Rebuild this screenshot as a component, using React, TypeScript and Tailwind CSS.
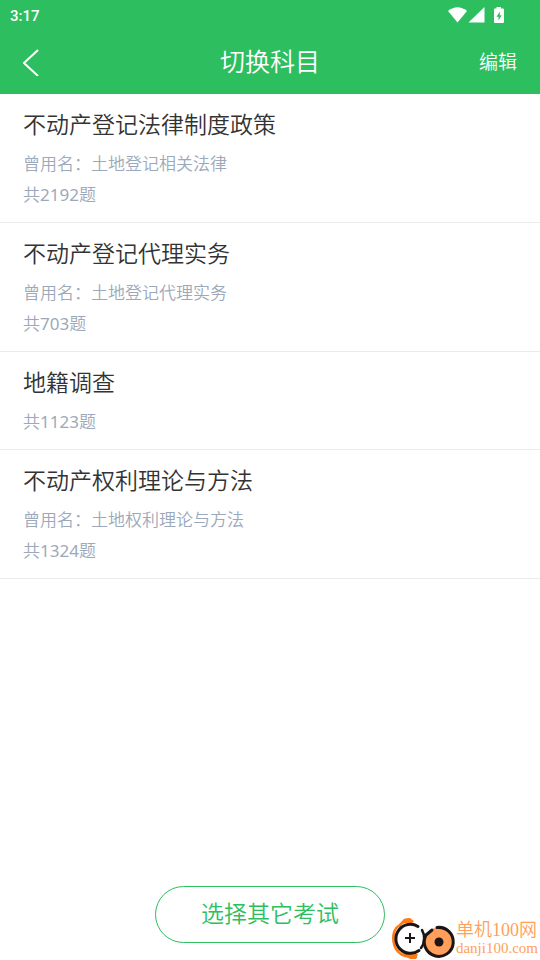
import React from 'react';

const subjects = [
  { title: '不动产登记法律制度政策', formerName: '土地登记相关法律', count: 2192 },
  { title: '不动产登记代理实务', formerName: '土地登记代理实务', count: 703 },
  { title: '地籍调查', count: 1123 },
  { title: '不动产权利理论与方法', formerName: '土地权利理论与方法', count: 1324 },
];

const StatusBar = () => (
  <div className="flex h-8 items-center justify-between pl-[10px] pr-9">
    <span className="font-[Roboto,sans-serif] text-[15px] font-medium">3:17</span>
    <svg width="56" height="18" viewBox="0 0 56 18" fill="currentColor" aria-hidden="true">
      <path d="M0 4Q9.500-3.500 19 4L9.500 15.500Z" />
      <path d="M20.500 15.500L36.500 0V15.500Z" />
      <path fillRule="evenodd" d="M48.500 0H53V1.500H55Q56 1.500 56 2.500V15Q56 16 55 16H47Q46 16 46 15V2.500Q46 1.500 47 1.500H48.500ZM51.800 4.500L48.500 9.700H50.500V13.500L53.700 8.300H51.800Z" />
    </svg>
  </div>
);

const Header = () => (
  <header className="bg-[#2dbe60] text-white">
    <StatusBar />
    <div className="grid h-[62px] grid-cols-3 items-center px-[23px] pb-[2px]">
      <button aria-label="返回" className="justify-self-start">
        <svg width="16" height="28" viewBox="0 0 16 28" fill="none" stroke="currentColor" strokeWidth="2" aria-hidden="true">
          <path d="M15 2L1 15L15 28" />
        </svg>
      </button>
      <h1 className="justify-self-center text-[25px]">切换科目</h1>
      <button className="justify-self-end text-[19px]">编辑</button>
    </div>
  </header>
);

const Watermark = () => (
  <div className="absolute right-[2px] bottom-0 flex items-end text-[#ff9f5b]">
    <svg width="65" height="42" viewBox="0 0 65 42" fill="none" aria-hidden="true">
      <path d="M21 4L19 1.500L14 2L9 7C3 10 1 18 3 26C5 34 11 38 19 39L25 39" stroke="#ff7a14" strokeWidth="2.500" strokeLinecap="round" />
      <path d="M8 7L13 1L18 0L23 3L21 5L14 5ZM12 36L27 36L25 41L19 41Z" fill="#ff7a14" />
      <circle cx="19" cy="21" r="14.500" fill="#fff" />
      <path d="M27 8.500A14.500 14.500 0 1 0 28 32.500" stroke="#1c1515" strokeWidth="3" strokeLinecap="round" />
      <path d="M31 12C34 17 34 25 30 30M33 17L36 25" stroke="#1c1515" strokeWidth="2.500" strokeLinecap="round" />
      <circle cx="48" cy="24" r="14.500" fill="#ff9f5b" />
      <path d="M46 9.500A14.500 14.500 0 1 1 35 17L41 12" stroke="#1c1515" strokeWidth="3" strokeLinecap="round" />
      <circle cx="48" cy="24" r="4.500" fill="#1c1515" />
      <path d="M14 20H24M19 15V25" stroke="#1c1515" strokeWidth="2" />
    </svg>
    <div className="pb-1 font-['Liberation_Serif','Noto_Sans_CJK_SC',serif]">
      <p className="text-[18px] leading-5">单机100网</p>
      <p className="text-[15px] leading-4">danji100.com</p>
    </div>
  </div>
);

const App = () => {
  return (
    <div className="relative flex min-h-screen flex-col bg-white font-['Noto_Sans','Noto_Sans_CJK_SC',sans-serif] font-[350]">
      <Header />

      <ul>
        {subjects.map((subject) => (
          <li key={subject.title} className="border-b border-[#ebebeb] px-[23px] pt-[14px] pb-3">
            <h2 className="mb-2 text-[23px] leading-8 text-[#333333]">{subject.title}</h2>
            <div className="text-[17px] leading-[31px] text-[#9ca9ba]">
              {subject.formerName && <p>曾用名：{subject.formerName}</p>}
              <p>
                共<span className="font-normal">{subject.count}</span>题
              </p>
            </div>
          </li>
        ))}
      </ul>

      <div className="mt-auto flex justify-center pb-[17px]">
        <button className="h-[57px] rounded-full border border-[#2dbe60] px-[45px] pb-[2px] text-[23px] text-[#2dbe60]">
          选择其它考试
        </button>
      </div>

      <Watermark />
    </div>
  );
};

export default App;
